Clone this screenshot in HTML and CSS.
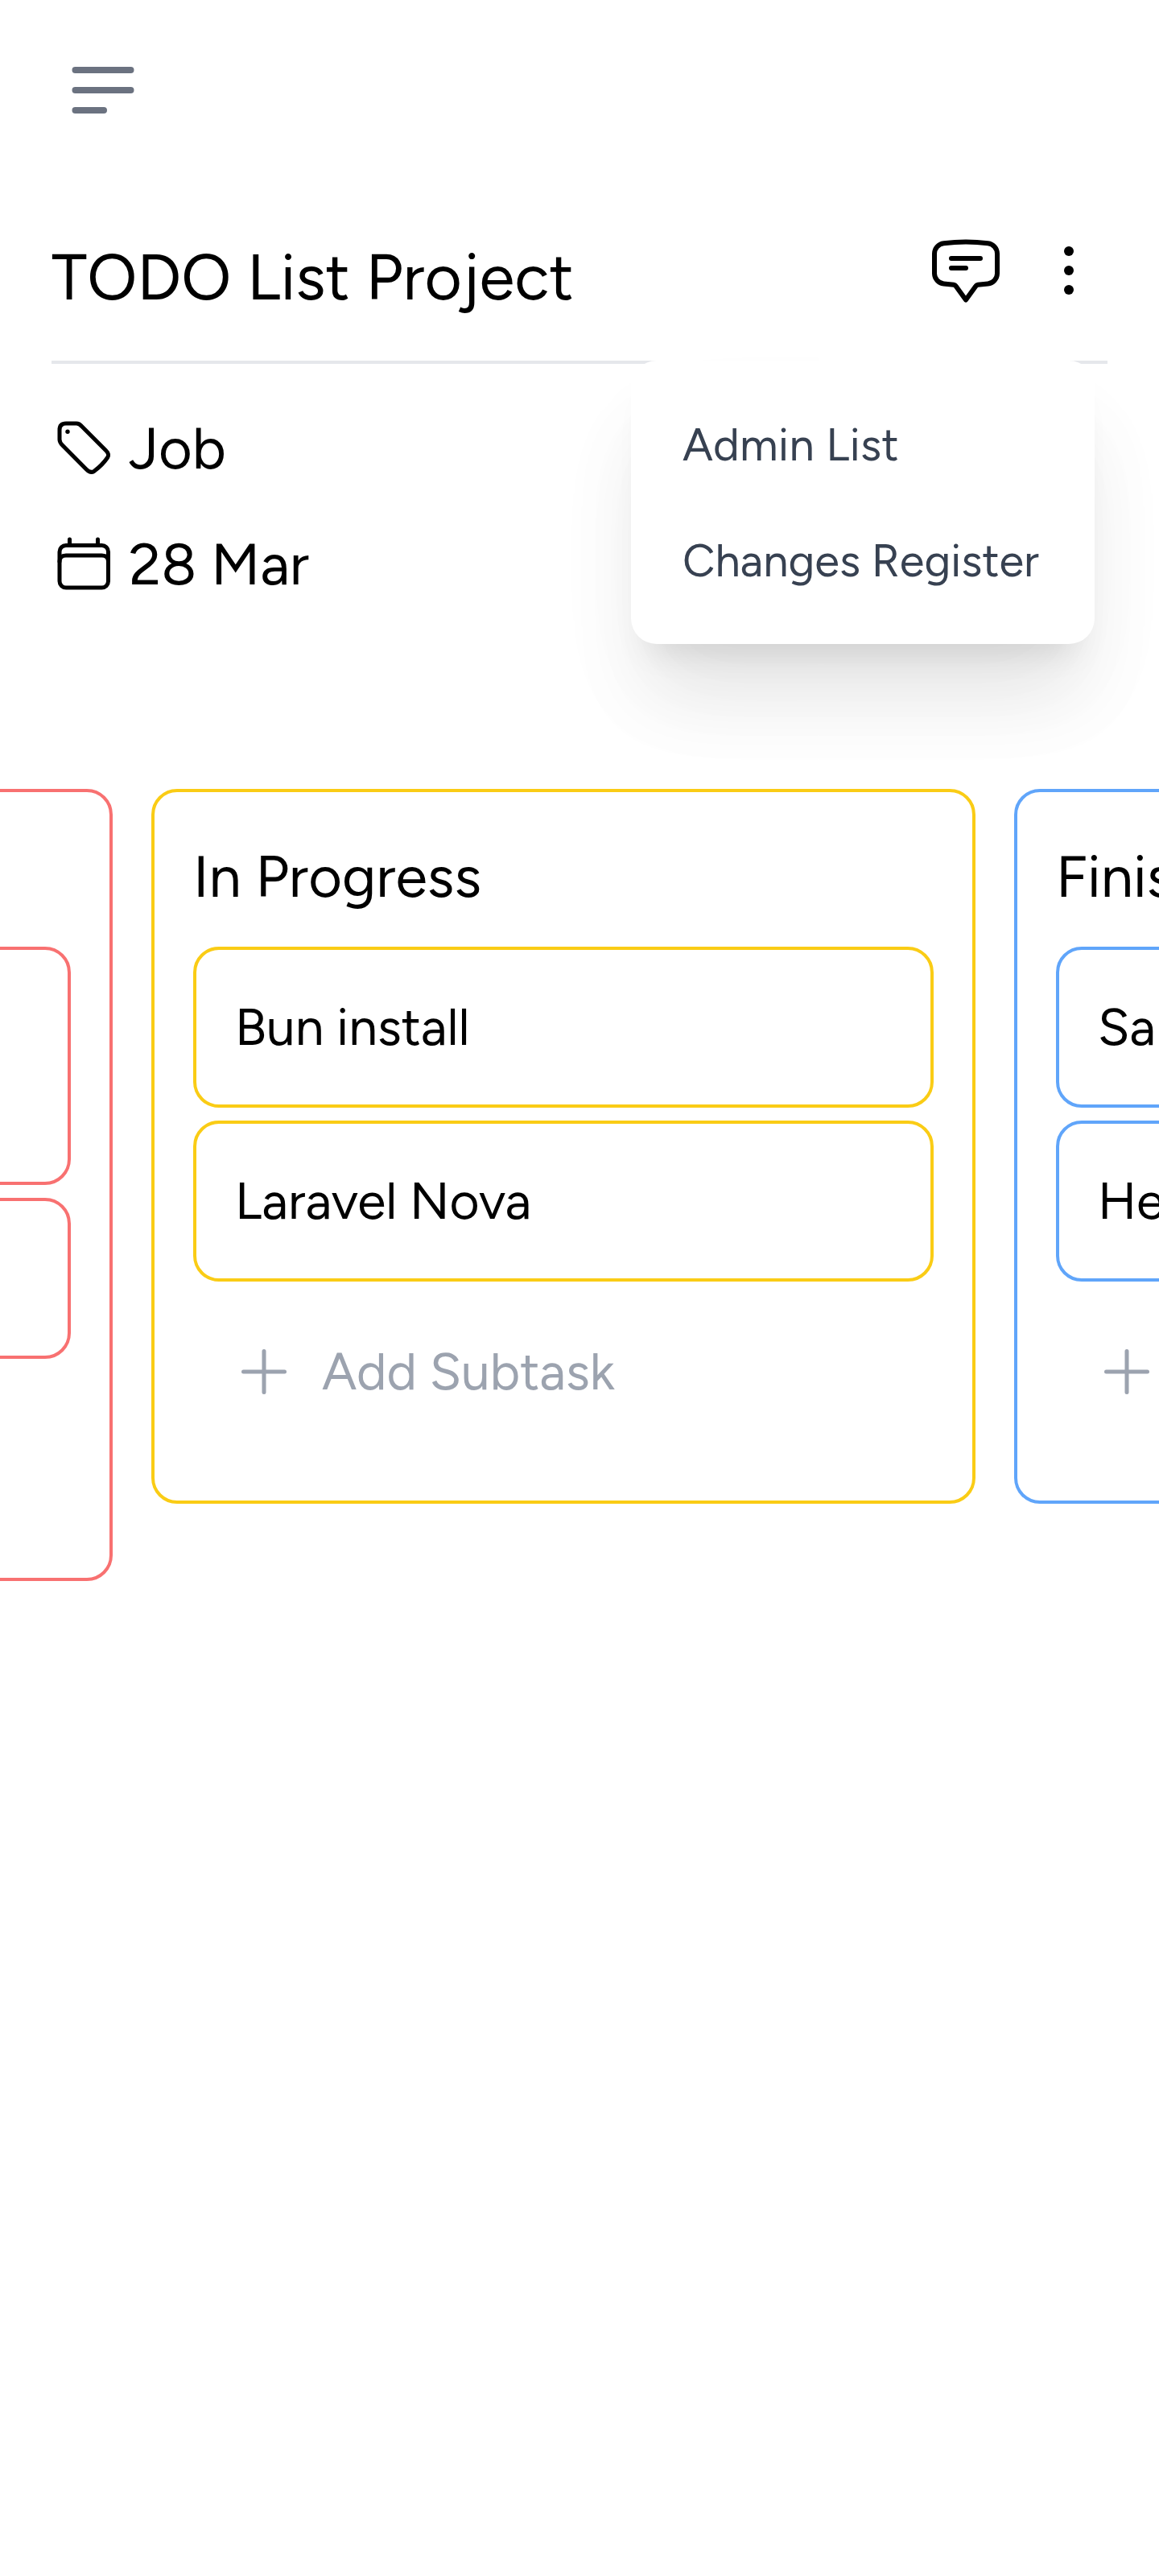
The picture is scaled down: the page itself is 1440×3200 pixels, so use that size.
FILE: index.html
```html
<!DOCTYPE html>
<html lang="en">
<head>
<meta charset="utf-8">
<title>TODO List Project</title>
<link rel="stylesheet" href="styles.css">
</head>
<body>
<nav class="navbar">
  <svg class="menu-icon" viewBox="0 0 96 96"><path d="M13.500 23h69M13.500 48h69M13.500 73h35.500"/></svg>
</nav>
<header class="project-header">
  <h1 class="project-title">TODO List Project</h1>
  <div class="actions">
    <svg class="icon comment" viewBox="0 0 96 96"><path d="M20.500 29.200Q48 25.900 75.500 29.200A13 13 0 0 1 87 42V67A13 13 0 0 1 75.500 79.500L63 80.800Q61.300 81 60.300 82.500L48 99.500L35.700 82.500Q34.700 81 33 80.800L20.500 79.500A13 13 0 0 1 9 67V42A13 13 0 0 1 20.500 29.200ZM30 48H66M30 60H48"/></svg>
    <svg class="icon dots" viewBox="0 0 96 96"><circle cx="48" cy="24" r="6"/><circle cx="48" cy="48" r="6"/><circle cx="48" cy="72" r="6"/></svg>
    <div class="dropdown">
      <a class="dropdown-item admin">Admin List</a>
      <a class="dropdown-item">Changes Register</a>
    </div>
  </div>
</header>
<section class="details">
  <div class="detail">
    <svg class="detail-icon" viewBox="0 0 80 80"><path d="M18 10H31Q34.500 10 37.500 13.500L67.200 43.300C71 47 71.500 49.500 69.500 52.500C65 59 59.500 64.500 53 69.300C50 71.300 47 70.800 43.500 67.300L13.500 37Q10 33.500 10 30V18Q10 10 18 10Z"/><circle class="solid" cx="20" cy="20.300" r="2.700"/></svg>
    <span class="detail-text">Job</span>
  </div>
  <div class="detail">
    <svg class="detail-icon" viewBox="0 0 80 80"><rect x="10" y="17.500" width="60.500" height="52.500" rx="8"/><path d="M10 37.500Q10 30 18 30H62.500Q70.500 30 70.500 37.500M22.500 10V17M57.500 10V17"/></svg>
    <span class="detail-text">28 Mar</span>
  </div>
</section>
<main class="board">
  <section class="column red">
    <h2 class="column-title"></h2>
    <div class="card tall"></div>
    <div class="card"></div>
    <div class="add"></div>
  </section>
  <section class="column yellow">
    <h2 class="column-title">In Progress</h2>
    <div class="card">Bun install</div>
    <div class="card">Laravel Nova</div>
    <div class="add"><svg class="plus" viewBox="0 0 72 72"><path d="M36 10.500V61.500M10.500 36H61.500"/></svg><span>Add Subtask</span></div>
  </section>
  <section class="column blue">
    <h2 class="column-title">Finis</h2>
    <div class="card">Sa</div>
    <div class="card">He</div>
    <div class="add"><svg class="plus" viewBox="0 0 72 72"><path d="M36 10.500V61.500M10.500 36H61.500"/></svg></div>
  </section>
</main>
</body>
</html>
```
FILE: styles.css
```css
* { box-sizing: border-box; }

body {
  margin: 0;
  min-height: 3200px;
  overflow: hidden;
  background: #fff;
  color: #000;
  font-family: Figtree, Lato, sans-serif;
  font-size: 64px;
  line-height: 96px;
}

svg { display: block; flex: none; overflow: visible; fill: none; stroke: #000; stroke-linecap: round; stroke-linejoin: round; }

.navbar { height: 224px; padding: 64px 80px; }
.menu-icon { width: 96px; height: 96px; stroke: #6b7280; stroke-width: 8; }

.project-header {
  display: flex;
  align-items: flex-start;
  justify-content: space-between;
  height: 228px;
  margin: 0 64px;
  padding-top: 64px;
  border-bottom: 4px solid #e5e7eb;
}
.project-title { margin: 0; font-size: 80px; font-weight: 400; line-height: 112px; }

.actions { position: relative; display: flex; gap: 32px; }
.icon { width: 96px; height: 96px; stroke-width: 6; }
.comment { margin-top: -15px; }
.dots { fill: #000; stroke: none; }

.dropdown {
  position: absolute;
  top: 160px;
  right: 16px;
  width: 576px;
  padding: 32px 0;
  border-radius: 32px;
  background: #fff;
  box-shadow: 0 70px 130px rgba(0, 0, 0, .03), 0 80px 100px -20px rgba(0, 0, 0, .085), 0 32px 40px -24px rgba(0, 0, 0, .1);
}
.dropdown-item { display: block; padding: 33px 64px 31px; color: #374151; font-size: 56px; line-height: 80px; white-space: nowrap; }
.admin { letter-spacing: .35px; }

.details { display: flex; flex-direction: column; gap: 32px; height: 528px; padding: 48px 64px; font-size: 72px; line-height: 112px; }
.detail { display: flex; align-items: center; gap: 16px; height: 112px; }
.detail-text { padding-top: 2px; }
.detail-icon { width: 80px; height: 80px; stroke-width: 5; }
.solid { fill: #000; stroke: none; }

.board { display: flex; align-items: flex-start; gap: 48px; width: 1440px; padding-bottom: 64px; overflow: hidden; }
.column { flex: none; width: 1024px; padding: 48px; border: 4px solid; border-radius: 32px; }
.column:first-child { margin-left: -884px; }
.column-title { height: 112px; margin: 0 0 32px; color: #000; font-size: 72px; font-weight: 400; line-height: 114px; }
.red, .red .card { border-color: #f87171; }
.yellow, .yellow .card { border-color: #facc15; }
.blue, .blue .card { border-color: #60a5fa; }
.card { height: 200px; margin-bottom: 16px; padding: 48px; border: 4px solid; border-radius: 32px; }
.tall { height: 296px; }
.add { display: flex; align-items: center; gap: 36px; height: 192px; margin-bottom: 16px; padding: 48px 0 48px 52px; color: #9ca3af; }
.plus { width: 72px; height: 72px; stroke: #9ca3af; stroke-width: 5; }
```
